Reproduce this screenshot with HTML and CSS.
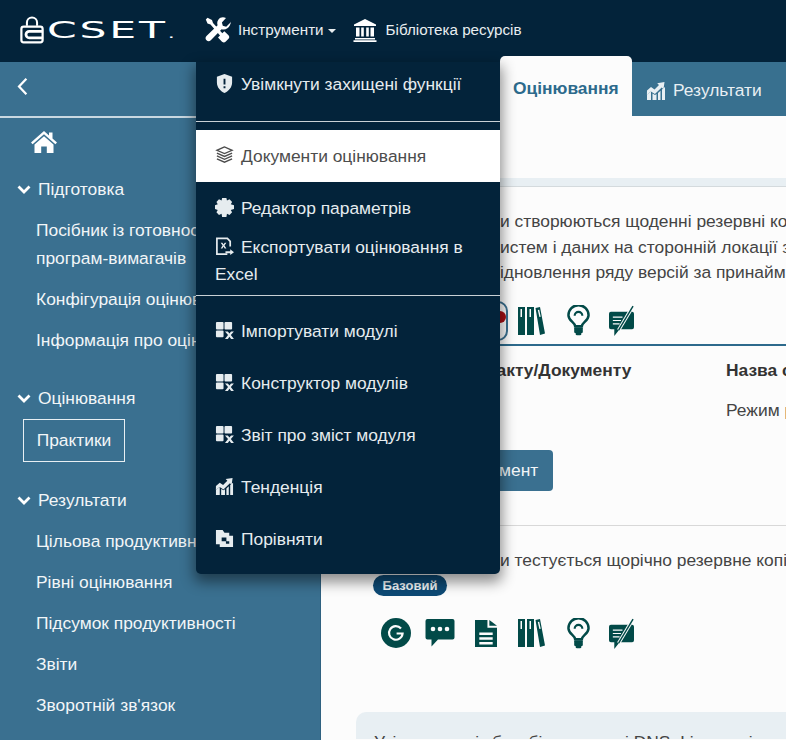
FILE: index.html
```html
<!DOCTYPE html>
<html lang="uk">
<head>
    <meta charset="UTF-8">
    <meta name="viewport" content="width=device-width, initial-scale=1.0">
    <title>CSET</title>
    <link rel="stylesheet" href="styles.css">
</head>
<body>
    <svg class="icon-defs" aria-hidden="true">
        <symbol id="i-module" viewBox="0 0 20 20">
            <rect x="1" y="1" width="8" height="8" rx="1"/>
            <rect x="10" y="1" width="8" height="8" rx="1"/>
            <rect x="1" y="10" width="8" height="7" rx="1"/>
            <path d="M10.500 11h3l1.700 2.200 1.700-2.200h3l-3.200 3.800 3.200 4.200h-3l-1.700-2.400-1.700 2.400h-3l3.200-4.200z"/>
        </symbol>
        <symbol id="i-chart" viewBox="0 0 20 20">
            <path d="M1 9.500l4-3.500 3.500 2.500 4.500-4.500-1.800-1.800 7.300-1.200-1 7.300-1.800-1.800-6.800 6.600-4-2.500-4 3.200z"/>
            <path d="M1 13.500l4-3v8.500H1zM6.500 12.500l2.500 1.500 1.500-1v6h-4zM12 12l2.500-2.300V19H12zM16 8.500l3-2.500v13h-3z"/>
        </symbol>
        <symbol id="i-gauge" viewBox="0 0 30 30">
            <circle cx="15" cy="15" r="15"/>
            <path fill="none" stroke="#fcfcfc" stroke-width="2.200" d="M20 10.500a6.800 6.800 0 1 0 1.600 5h-6"/>
        </symbol>
        <symbol id="i-comment" viewBox="0 0 30 28">
            <path d="M2.500 0h25a2 2 0 0 1 2 2v16.500a2 2 0 0 1-2 2H13l-6.500 7v-7h-4a2 2 0 0 1-2-2V2a2 2 0 0 1 2-2z"/>
            <circle cx="8" cy="10" r="2.300" fill="#fcfcfc"/>
            <circle cx="15" cy="10" r="2.300" fill="#fcfcfc"/>
            <circle cx="22" cy="10" r="2.300" fill="#fcfcfc"/>
        </symbol>
        <symbol id="i-file" viewBox="0 0 23 28">
            <path fill-rule="evenodd" d="M0 0h13v8h10v20H0zM15 0l8 6h-8zM4.500 13v2.500h14V13zM4.500 18v2.500h14V18zM4.500 23v2.500h14V23z"/>
        </symbol>
        <symbol id="i-books" viewBox="0 0 27 28">
            <path fill-rule="evenodd" d="M0 0h7v28H0zM2.500 2v8h1.500V2zM9 0h7v28H9zM11.500 2v8H13V2zM17.500 1l4.500-1 5 26.500-5 1.500zM19.800 3l1.600 7 1.300-.3-1.500-7z"/>
        </symbol>
        <symbol id="i-bulb" viewBox="0 0 24 32">
            <path fill="none" stroke-width="2.600" stroke="currentColor" d="M8.500 22c0-4-7-5.500-7-11.500a10.500 10.500 0 0 1 21 0c0 6-7 7.500-7 11.500z"/>
            <path fill="none" stroke-width="2.200" stroke="currentColor" d="M8 11a4 4 0 0 1 8 0"/>
            <rect x="7.500" y="23" width="9" height="6" rx="1"/>
            <rect x="9" y="28" width="6" height="3.500" rx="1.500"/>
        </symbol>
        <symbol id="i-note" viewBox="0 0 26 32">
            <path d="M2 7h22a2 2 0 0 1 2 2v14a2 2 0 0 1-2 2H11l-5.500 7v-7H2a2 2 0 0 1-2-2V9a2 2 0 0 1 2-2z"/>
            <path fill="none" stroke="#fcfcfc" stroke-width="1.200" d="M4 12.500h10M4 16h8.500M4 19.500h7"/>
            <path fill="none" stroke="#fcfcfc" stroke-width="3.600" d="M10 26L22 6"/>
            <path fill="none" stroke="currentColor" stroke-width="1.500" d="M10 26L25 1"/>
        </symbol>
    </svg>

    <header class="topbar">
        <div class="logo">
            <svg class="logo-lock" viewBox="0 0 26 30" width="24" height="29">
                <path fill="none" stroke="#fff" stroke-width="2.200" d="M7.500 11V7.500a5.500 5.500 0 0 1 11 0V11"/>
                <rect x="1.500" y="12" width="23" height="17" rx="2.500" fill="none" stroke="#fff" stroke-width="2.400"/>
                <path fill="none" stroke="#fff" stroke-width="3" d="M25 17H10a3.500 3.500 0 0 0 0 7h15"/>
            </svg>
            <span class="logo-name">CSET<small class="logo-dot">.</small></span>
        </div>
        <a class="topbar-link">
            <svg class="tools-icon" viewBox="0 0 26 26" width="26" height="26">
                <path fill="#fff" d="M2.500.8L.8 2.500l1.700 4 3 .9L15 18.500l-2 2 4 4.300c1.400 1 2.500 1 3.500 0l3-3c1-1 1-2.300 0-3.500l-4.200-4-2 2L8 6 7 3z"/>
                <path fill="#fff" d="M25.500 5.500l-4.300 4.200-3.400-.9-.9-3.400L21 1c-3-1.300-6-.6-7.500 1.500-1.400 1.800-1.600 3.800-.9 5.700L1.500 19c-1.300 1.300-1.300 3 0 4.300 1.300 1.300 3 1.300 4.300 0l10.800-11c2 .6 4 .4 5.800-1 2.300-1.700 3.200-4.200 3.600-6.800z"/>
            </svg>
            <span>Інструменти</span><span class="caret"></span>
        </a>
        <a class="topbar-link topbar-link-lib">
            <svg viewBox="0 0 24 24" width="24" height="24" fill="#fff">
                <path d="M12 1L1 6.500V8h22V6.500z"/>
                <path d="M3 9.500h3.500v9H3zM8.200 9.500h2.600v9H8.200zM13.200 9.500h2.600v9h-2.600zM17.500 9.500H21v9h-3.500zM2 20h20v1.500H2zM.5 22.300h23V24H.5z"/>
            </svg>
            <span>Бібліотека ресурсів</span>
        </a>
    </header>

    <div class="layout">
        <aside class="sidebar">
            <div class="sidebar-back">
                <svg viewBox="0 0 14 22" width="13" height="19"><path fill="none" stroke="#fff" stroke-width="2.600" d="M11.500 2L3 11l8.500 9"/></svg>
            </div>
            <div class="sidebar-home">
                <svg viewBox="0 0 26 22" width="26" height="22" fill="#fff">
                    <path d="M13 0L0 11.500l1.600 1.700L13 3.200l11.400 10 1.600-1.700-4.500-4V1.500h-3.500v3z"/>
                    <path d="M13 5.200L3.500 13.500V22h6.700v-6.500h5.600V22h6.700v-8.500z"/>
                </svg>
            </div>
            <div class="nav-group">
                <div class="nav-head"><svg class="chev" viewBox="0 0 14 9"><path d="M1.500 1.500L7 7l5.500-5.500"/></svg>Підготовка</div>
                <a class="nav-item nav-item-wrap">Посібник із готовності до програм-вимагачів</a>
                <a class="nav-item">Конфігурація оцінювання</a>
                <a class="nav-item">Інформація про оцінювання</a>
            </div>
            <div class="nav-group">
                <div class="nav-head"><svg class="chev" viewBox="0 0 14 9"><path d="M1.500 1.500L7 7l5.500-5.500"/></svg>Оцінювання</div>
                <a class="nav-item nav-item-active">Практики</a>
            </div>
            <div class="nav-group">
                <div class="nav-head"><svg class="chev" viewBox="0 0 14 9"><path d="M1.500 1.500L7 7l5.500-5.500"/></svg>Результати</div>
                <a class="nav-item">Цільова продуктивність</a>
                <a class="nav-item">Рівні оцінювання</a>
                <a class="nav-item">Підсумок продуктивності</a>
                <a class="nav-item">Звіти</a>
                <a class="nav-item">Зворотній зв'язок</a>
            </div>
        </aside>

        <main class="content">
            <nav class="tabs">
                <a class="tab tab-active">Оцінювання</a>
                <a class="tab">
                    <svg class="tab-icon" width="20" height="20"><use href="#i-chart"/></svg>Результати
                </a>
            </nav>
            <div class="toolbar"></div>

            <section class="question">
                <p class="q-line"><span class="q-lead">RP-1 Ч</span>и створюються щоденні резервні копії важливих</p>
                <p class="q-line"><span class="q-lead">критичних с</span>истем і даних на сторонній локації з можливістю</p>
                <p class="q-line"><span class="q-lead">для в</span>ідновлення ряду версій за принаймні три місяці?</p>
                <div class="q-icons q-icons-first">
                    <svg class="ic ic-g"><use href="#i-gauge"/></svg>
                    <svg class="ic ic-c"><use href="#i-comment"/></svg>
                    <span class="ic-slot ic-flag"><svg class="ic ic-f"><use href="#i-file"/></svg><span class="flag-dot"></span></span>
                    <svg class="ic ic-b"><use href="#i-books"/></svg>
                    <svg class="ic ic-l"><use href="#i-bulb"/></svg>
                    <svg class="ic ic-n"><use href="#i-note"/></svg>
                </div>
                <div class="doc-table">
                    <div class="doc-head">
                        <span class="doc-col">Назва артефакту/Документу</span>
                        <span>Назва структури документа</span>
                    </div>
                    <div class="doc-row">
                        <span class="doc-col"></span>
                        <span>Режим резервного копіювання</span>
                    </div>
                </div>
                <button class="doc-btn">Додати документ</button>
            </section>

            <section class="question question-next">
                <p class="q-line"><span class="q-lead">RP-2 Ч</span>и тестується щорічно резервне копіювання даних</p>
                <span class="badge">Базовий</span>
                <div class="q-icons">
                    <svg class="ic ic-g"><use href="#i-gauge"/></svg>
                    <svg class="ic ic-c"><use href="#i-comment"/></svg>
                    <span class="ic-slot"><svg class="ic ic-f"><use href="#i-file"/></svg></span>
                    <svg class="ic ic-b"><use href="#i-books"/></svg>
                    <svg class="ic ic-l"><use href="#i-bulb"/></svg>
                    <svg class="ic ic-n"><use href="#i-note"/></svg>
                </div>
            </section>

            <div class="next-card">Усі журнали із баз, бізнес-логи і DNS, Linux та інших систем</div>
        </main>
    </div>

    <div class="tools-menu">
        <a class="menu-item menu-item-first">
            <svg class="menu-icon" viewBox="0 0 18 20"><path fill-rule="evenodd" d="M9 0l8 3v6c0 5-3.500 9-8 11-4.500-2-8-6-8-11V3zM8 5v6h2V5zM8 13v2h2v-2z"/></svg>Увімкнути захищені функції
        </a>
        <hr class="menu-rule">
        <a class="menu-item menu-item-active">
            <svg class="menu-icon" viewBox="0 0 20 20"><path fill="none" stroke="currentColor" stroke-width="1.400" d="M10 1L2 4.500 10 8l8-3.500zM2 7.500L10 11l8-3.500M2 10.500L10 14l8-3.500M2 13.500L10 17l8-3.500"/></svg>Документи оцінювання
        </a>
        <a class="menu-item menu-item-gear">
            <svg class="menu-icon" viewBox="0 0 20 20"><path d="M7.500 0h4.500l.6 2.600 2.700-1.200 2.700 2.700-1.400 2.500 3.400.9v4.200l-3.400.8 1.400 2.500-2.700 2.800-2.700-1.300-.6 3.500H7.500l-.6-3.500-2.700 1.300L1.500 15l1.400-2.500L0 11.700V7.500l2.900-.9-1.400-2.500 2.700-2.700 2.700 1.200z"/></svg>Редактор параметрів
        </a>
        <a class="menu-item menu-item-export">
            <svg class="menu-icon" viewBox="0 0 20 20"><path fill="none" stroke="currentColor" stroke-width="1.800" d="M13 18H2V1.500h11l3 3V10"/><path d="M6 6h1.800l1.200 2 1.200-2H12L10 9l2 3h-1.800L9 10l-1.200 2H6l2-3zM11 15h5v-2l4 3-4 3v-2h-5z"/></svg>Експортувати оцінювання в Excel
        </a>
        <hr class="menu-rule menu-rule-low">
        <a class="menu-item"><svg class="menu-icon"><use href="#i-module"/></svg>Імпортувати модулі</a>
        <a class="menu-item"><svg class="menu-icon"><use href="#i-module"/></svg>Конструктор модулів</a>
        <a class="menu-item"><svg class="menu-icon"><use href="#i-module"/></svg>Звіт про зміст модуля</a>
        <a class="menu-item"><svg class="menu-icon"><use href="#i-chart"/></svg>Тенденція</a>
        <a class="menu-item">
            <svg class="menu-icon" viewBox="0 0 20 20"><path fill-rule="evenodd" d="M1 1h7l2 3h5v3h4v12H5v-3H1zM7 9h5v4H7zM11.500 13h3.500v2.500h-3.500z"/></svg>Порівняти
        </a>
    </div>
</body>
</html>
```

FILE: styles.css
```css
* {
    box-sizing: border-box;
}
html, body {
    margin: 0;
    height: 740px;
    overflow: hidden;
}
body {
    font-family: "Liberation Sans", Arial, sans-serif;
    font-size: 17.4px;
    color: #444;
    background-color: #fcfcfc;
}
.icon-defs {
    display: none;
}

/* top bar */
.topbar {
    height: 62px;
    background-color: #03233a;
    display: flex;
    align-items: center;
    padding: 0 0 3px 20px;
    color: #e8edf0;
}
.logo {
    display: flex;
    align-items: flex-end;
    width: 185px;
    height: 29px;
}
.logo-lock {
    flex: none;
}
.logo-name {
    font-family: "DejaVu Sans", sans-serif;
    font-size: 23px;
    line-height: 20px;
    letter-spacing: 1.500px;
    color: #fff;
    margin-left: 3px;
    transform: scaleX(1.85);
    transform-origin: left;
}
.logo-dot {
    font-size: 12px;
}
.topbar-link {
    display: flex;
    align-items: center;
    font-size: 15.200px;
}
.tools-icon {
    margin-right: 7px;
}
.caret {
    width: 0;
    height: 0;
    margin-left: 4px;
    margin-top: 2px;
    border-left: 4px solid transparent;
    border-right: 4px solid transparent;
    border-top: 4px solid #e8edf0;
}
.topbar-link-lib {
    margin-left: 17px;
}
.topbar-link-lib svg {
    margin-right: 9px;
}

/* page under the bar */
.layout {
    display: flex;
    height: 678px;
}
.sidebar {
    width: 321px;
    flex: none;
    background-color: #3a7090;
    border-right: 1px solid #2f6180;
    color: #f2f6f8;
}
.sidebar-back {
    height: 56px;
    padding: 15px 0 0 16px;
    border-bottom: 2px solid #c9d8e1;
}
.sidebar-home {
    height: 51px;
    padding: 13px 0 0 31px;
}
.nav-group {
    margin-bottom: 24px;
    padding-top: 6px;
}
.nav-head {
    display: flex;
    align-items: center;
    height: 28px;
    padding-left: 17px;
}
.chev {
    width: 14px;
    height: 9px;
    margin-right: 7px;
    fill: none;
    stroke: #fff;
    stroke-width: 2.8;
}
.nav-item {
    display: block;
    padding-left: 36px;
    line-height: 28px;
    margin-top: 13px;
}
.nav-item-wrap {
    width: 290px;
}
.nav-item-active {
    width: 102px;
    height: 43px;
    margin: 7px 0 -6px 23px;
    padding: 0;
    line-height: 41px;
    text-align: center;
    border: 1px solid #e8eff3;
}

/* main column */
.content {
    flex: 1;
    min-width: 0;
    background-color: #fcfcfc;
}
.tabs {
    height: 54px;
    background-color: #38708f;
    display: flex;
    padding-left: 179px;
}
.tab {
    display: flex;
    align-items: center;
    color: #e8eff3;
    padding: 3px 24px 0 14px;
}
.tab-active {
    height: 60px;
    width: 132px;
    margin-top: -6px;
    padding: 4px 0 0 13px;
    background-color: #fcfcfc;
    color: #2d6a8c;
    font-weight: bold;
    border-radius: 5px 5px 0 0;
}
.tab-icon {
    fill: #e8eff3;
    margin-right: 7px;
}
.toolbar {
    height: 70px;
    border-bottom: 8px solid #e8eff3;
    box-shadow: 0 1px 0 #d4dadd;
}
.question {
    padding: 23px 0 0 52px;
}
.question-next {
    padding-top: 22px;
    border-top: 1px solid #d8d8d8;
}
.q-line {
    margin: 0;
    line-height: 25.500px;
    white-space: nowrap;
    overflow: hidden;
}
.q-lead {
    display: inline-block;
    width: 127px;
    text-align: right;
    overflow: hidden;
    vertical-align: bottom;
}
.q-icons {
    display: flex;
    align-items: center;
    height: 46px;
    margin-top: 14px;
    padding-left: 8px;
    color: #024a48;
    fill: #024a48;
}
.q-icons-first {
    margin-top: 12px;
    border-bottom: 2px solid #2d6a8c;
    height: 48px;
}
.ic-g {
    width: 30px;
    height: 30px;
}
.ic-c {
    width: 30px;
    height: 28px;
    margin-left: 14px;
}
.ic-slot {
    display: flex;
    justify-content: center;
    align-items: center;
    width: 44px;
    height: 40px;
    margin-left: 9px;
    position: relative;
}
.ic-flag {
    border: 2px solid #3a7090;
    border-radius: 10px;
}
.ic-f {
    width: 22px;
    height: 27px;
}
.flag-dot {
    position: absolute;
    top: 8px;
    right: 0;
    width: 12px;
    height: 12px;
    border-radius: 50%;
    background-color: #a80f14;
}
.ic-b {
    width: 27px;
    height: 28px;
    margin-left: 10px;
}
.ic-l {
    width: 23px;
    height: 31px;
    margin-left: 22px;
}
.ic-n {
    width: 25px;
    height: 31px;
    margin-left: 19px;
}
.doc-table {
    white-space: nowrap;
    overflow: hidden;
    padding-left: 14px;
}
.doc-head {
    display: flex;
    padding-top: 13px;
    line-height: 22px;
    font-weight: bold;
    color: #333;
}
.doc-row {
    display: flex;
    padding-top: 18px;
    line-height: 22px;
}
.doc-col {
    width: 339px;
    flex: none;
}
.doc-btn {
    display: block;
    width: 180px;
    height: 41px;
    margin: 29px 0 34px 0;
    padding-left: 18px;
    border: none;
    border-radius: 4px;
    background-color: #3a7090;
    color: #f2f6f8;
    font: inherit;
}
.badge {
    display: block;
    width: 74px;
    height: 21px;
    margin-top: 2px;
    border-radius: 11px;
    background-color: #0d4a75;
    color: #f2f6f8;
    font-size: 13px;
    font-weight: bold;
    line-height: 21px;
    text-align: center;
}
.next-card {
    margin: 56px 0 0 35px;
    height: 27px;
    overflow: hidden;
    padding: 20px 0 0 18px;
    background-color: #e8eff3;
    border-radius: 10px 0 0 0;
    white-space: nowrap;
}

/* Tools dropdown, open over the page */
.tools-menu {
    position: absolute;
    left: 196px;
    top: 62px;
    width: 304px;
    height: 512px;
    background-color: #03233a;
    color: #e6ecef;
    border-radius: 0 0 5px 5px;
    box-shadow: 0 6px 14px 2px rgba(0, 0, 0, 0.45);
}
.menu-item {
    display: block;
    padding: 0 19px;
    height: 52px;
    line-height: 52px;
}
.menu-item-first {
    height: 48px;
    line-height: 44px;
}
.menu-icon {
    width: 19px;
    height: 19px;
    margin-right: 7px;
    vertical-align: -3px;
    fill: currentColor;
}
.menu-rule {
    margin: 11px 0 0 0;
    border: none;
    border-top: 1px solid #c9d0d5;
}
.menu-rule-low {
    margin: 7px 0 9px 0;
}
.menu-item-active {
    margin-top: 8px;
    background-color: #fff;
    color: #4d4d4d;
}
.menu-item-gear {
    height: 39px;
    line-height: 52px;
}
.menu-item-export {
    height: auto;
    line-height: 27px;
    padding-top: 13px;
}
```
